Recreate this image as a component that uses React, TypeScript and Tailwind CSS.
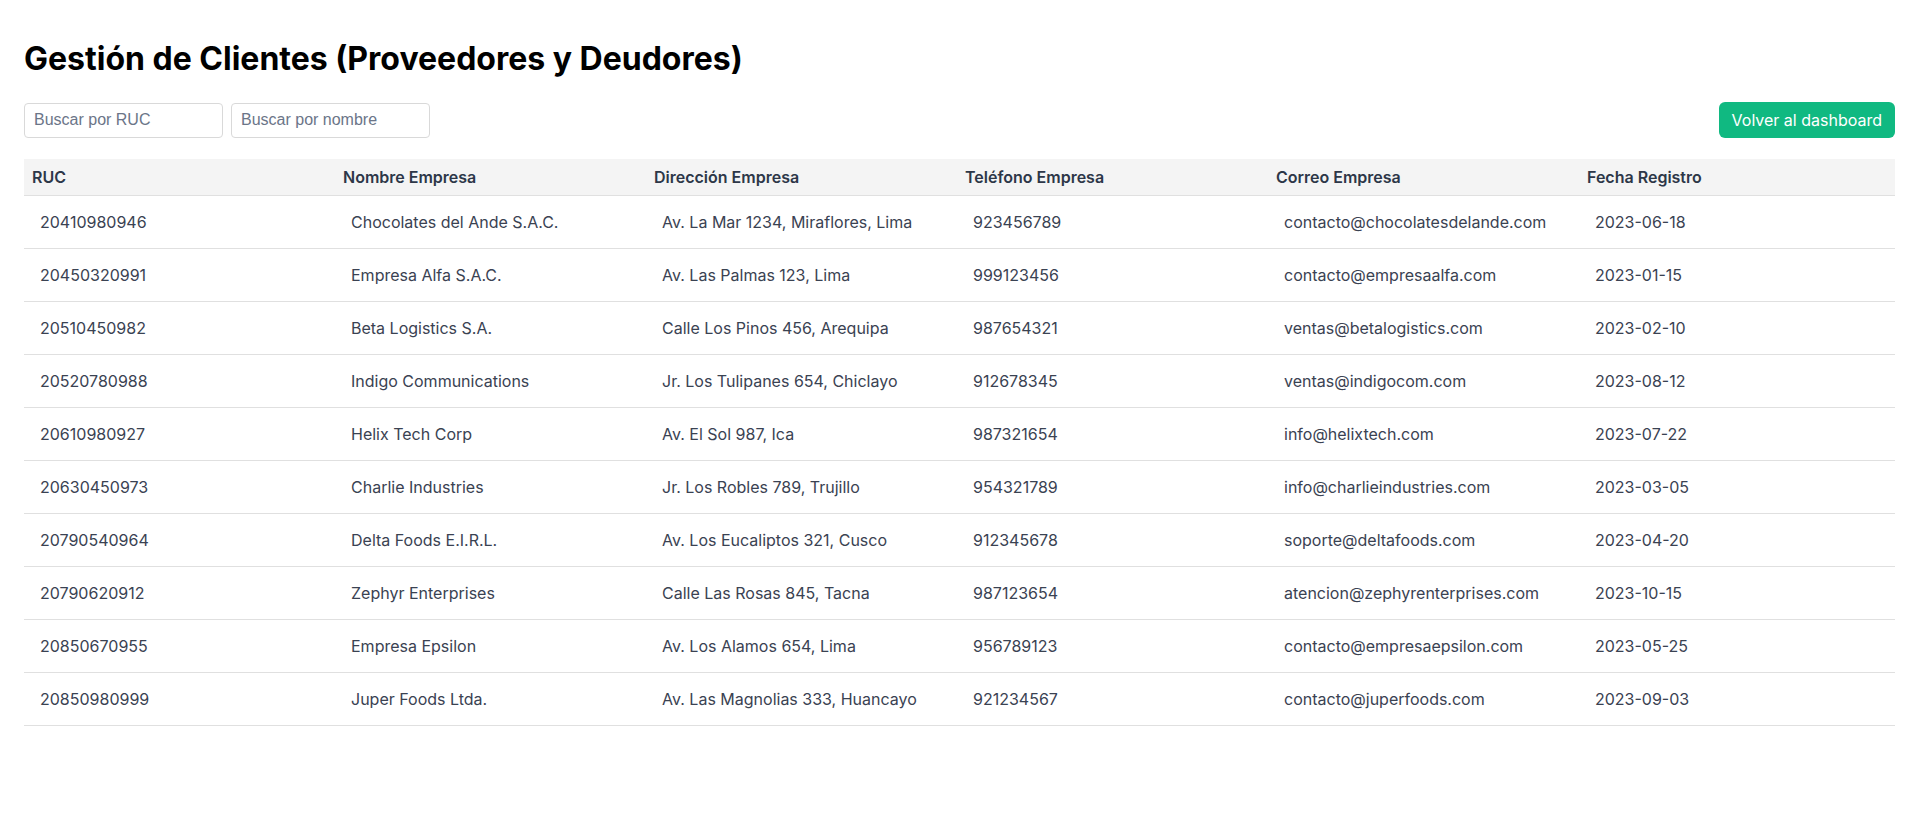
import React from "react";

const rows = [
  ["20410980946", "Chocolates del Ande S.A.C.", "Av. La Mar 1234, Miraflores, Lima", "923456789", "contacto@chocolatesdelande.com", "2023-06-18"],
  ["20450320991", "Empresa Alfa S.A.C.", "Av. Las Palmas 123, Lima", "999123456", "contacto@empresaalfa.com", "2023-01-15"],
  ["20510450982", "Beta Logistics S.A.", "Calle Los Pinos 456, Arequipa", "987654321", "ventas@betalogistics.com", "2023-02-10"],
  ["20520780988", "Indigo Communications", "Jr. Los Tulipanes 654, Chiclayo", "912678345", "ventas@indigocom.com", "2023-08-12"],
  ["20610980927", "Helix Tech Corp", "Av. El Sol 987, Ica", "987321654", "info@helixtech.com", "2023-07-22"],
  ["20630450973", "Charlie Industries", "Jr. Los Robles 789, Trujillo", "954321789", "info@charlieindustries.com", "2023-03-05"],
  ["20790540964", "Delta Foods E.I.R.L.", "Av. Los Eucaliptos 321, Cusco", "912345678", "soporte@deltafoods.com", "2023-04-20"],
  ["20790620912", "Zephyr Enterprises", "Calle Las Rosas 845, Tacna", "987123654", "atencion@zephyrenterprises.com", "2023-10-15"],
  ["20850670955", "Empresa Epsilon", "Av. Los Alamos 654, Lima", "956789123", "contacto@empresaepsilon.com", "2023-05-25"],
  ["20850980999", "Juper Foods Ltda.", "Av. Las Magnolias 333, Huancayo", "921234567", "contacto@juperfoods.com", "2023-09-03"],
];

const headers = ["RUC", "Nombre Empresa", "Dirección Empresa", "Teléfono Empresa", "Correo Empresa", "Fecha Registro"];

export default function App() {
  return (
    <div className="min-h-screen bg-white px-6 pt-[39px] font-['Inter',sans-serif]">
      <h1 className="text-[32px] leading-[40px] font-bold text-black">
        Gestión de Clientes (Proveedores y Deudores)
      </h1>
      <div className="mt-[23px] flex items-center justify-between">
        <div className="flex gap-2">
          <input
            placeholder="Buscar por RUC"
            className="h-[35px] w-[199px] rounded border border-[#d9d9d9] px-[9px] font-['Liberation_Sans',sans-serif] text-[16px] text-gray-800 placeholder:text-[#6b7588] outline-none"
          />
          <input
            placeholder="Buscar por nombre"
            className="h-[35px] w-[199px] rounded border border-[#d9d9d9] px-[9px] font-['Liberation_Sans',sans-serif] text-[16px] text-gray-800 placeholder:text-[#6b7588] outline-none"
          />
        </div>
        <button className="h-[36px] rounded-md bg-[#10b981] px-[13px] text-[16px] text-white">
          Volver al dashboard
        </button>
      </div>
      <table className="mt-[21px] w-full table-fixed border-collapse">
        <colgroup>
          <col className="w-[311px]" />
          <col className="w-[311px]" />
          <col className="w-[311px]" />
          <col className="w-[311px]" />
          <col className="w-[311px]" />
          <col />
        </colgroup>
        <thead>
          <tr className="border-b border-[#e0e0e0] bg-[#f4f4f4]">
            {headers.map((h) => (
              <th key={h} className="px-2 py-2 text-left text-[16px] leading-5 font-semibold text-[#2d3748]">
                {h}
              </th>
            ))}
          </tr>
        </thead>
        <tbody>
          {rows.map((r) => (
            <tr key={r[0]} className="border-b border-[#e0e0e0]">
              {r.map((c, i) => (
                <td key={i} className="px-4 py-4 text-[16px] leading-5 text-[#3a4252] whitespace-nowrap">
                  {c}
                </td>
              ))}
            </tr>
          ))}
        </tbody>
      </table>
    </div>
  );
}
